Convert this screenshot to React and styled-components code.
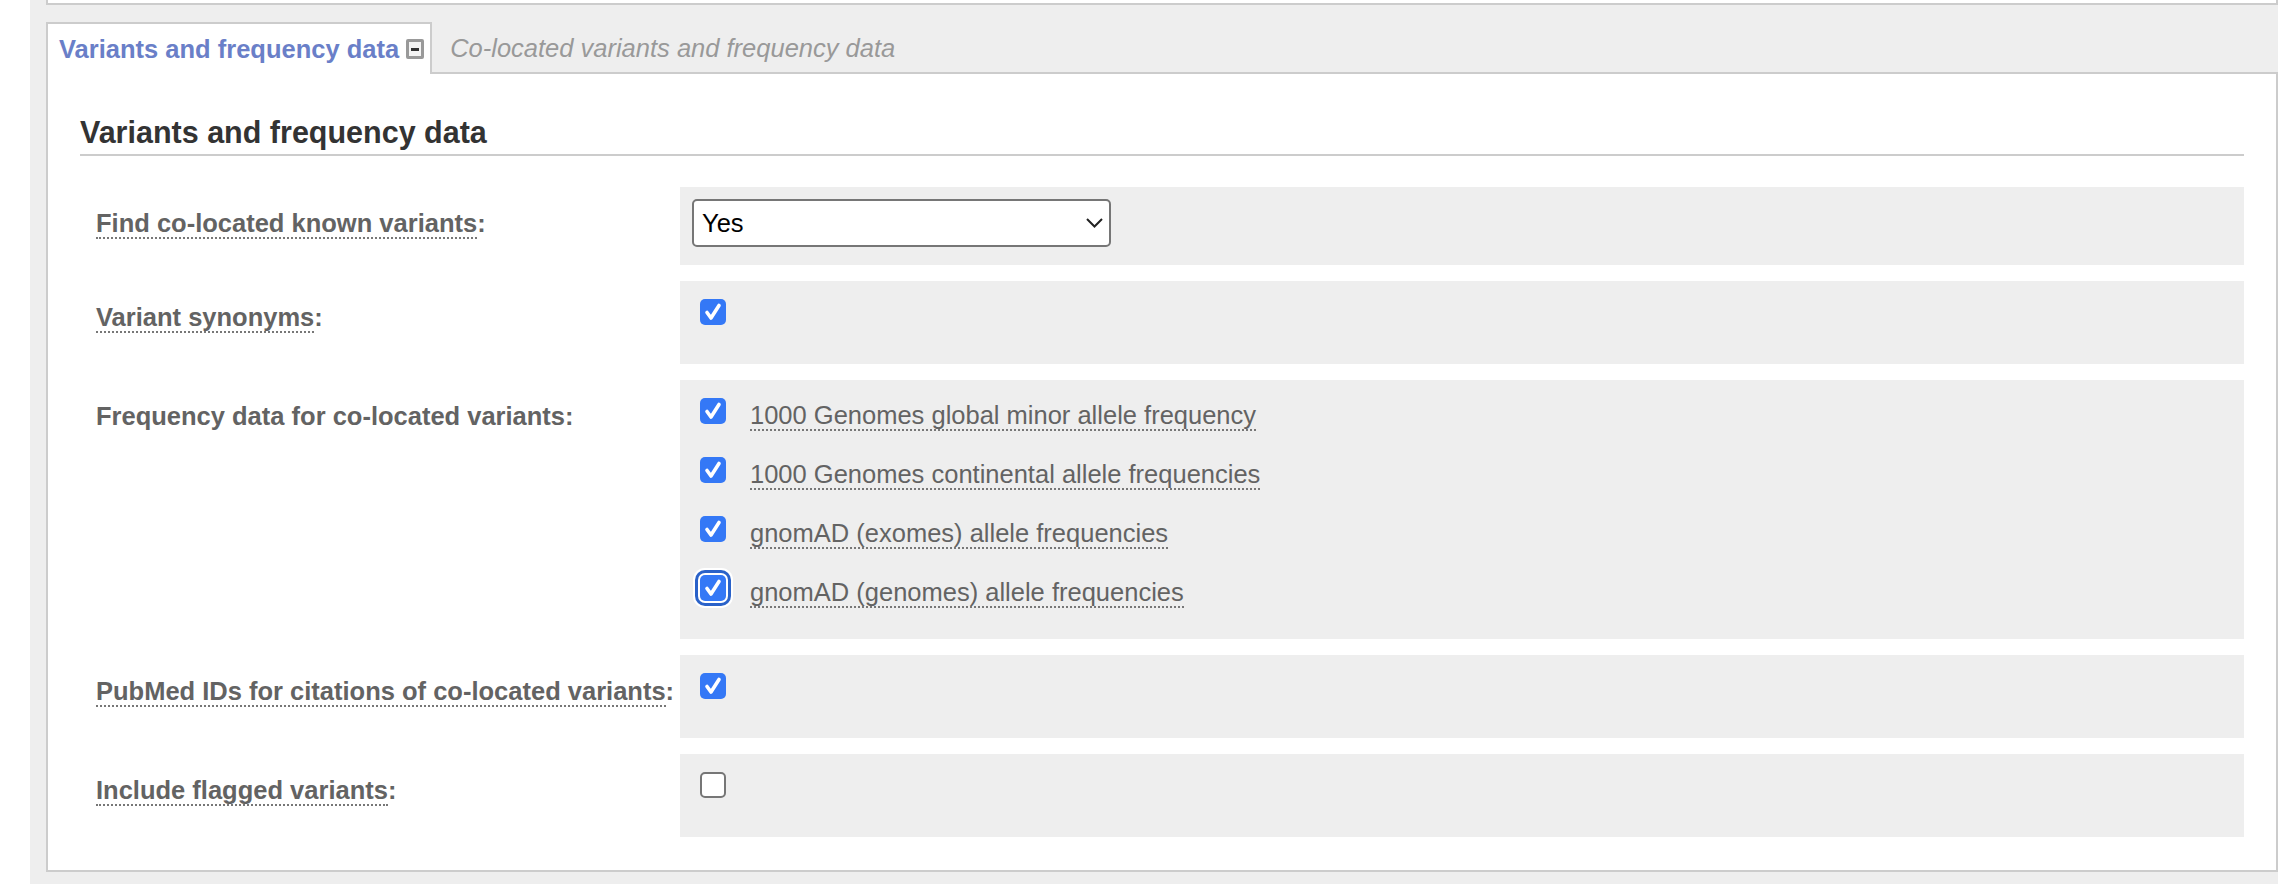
import React from "react";
import styled, { createGlobalStyle, css } from "styled-components";

const GlobalStyle = createGlobalStyle`
  html, body { margin: 0; padding: 0; background: #fff; }
  body { font-family: "Liberation Sans", Arial, Helvetica, sans-serif; }
  * { box-sizing: border-box; }
`;

const Page = styled.div`
  margin-left: 30px;
  width: 2248px;
  min-height: 884px;
  background: #eee;
  padding-left: 16px;
`;

const TopBox = styled.div`
  height: 5px;
  background: #fff;
  border: 2px solid #ccc;
  border-top: 0;
`;

const TabBar = styled.div`
  margin-top: 17px;
  display: flex;
  align-items: flex-end;
  border-bottom: 2px solid #ccc;
`;

const Tab = styled.div`
  display: flex;
  align-items: center;
  font-size: 25.5px;
  white-space: nowrap;
  ${(p) =>
    p.$active
      ? css`
          height: 52px;
          margin-bottom: -2px;
          padding: 0 6px 0 11px;
          background: #fff;
          border: 2px solid #ccc;
          border-bottom: 0;
          color: #6a7fc8;
          font-weight: bold;
        `
      : css`
          height: 48px;
          padding: 0 0 0 18px;
          color: #999;
          font-style: italic;
        `}
`;

const CollapseIcon = styled.span`
  position: relative;
  display: inline-block;
  width: 18px;
  height: 20px;
  margin-left: 7px;
  border: 3px solid #999;
  border-radius: 2px;
  background: #f4f4f4;
  &::after {
    content: "";
    position: absolute;
    left: 2px;
    right: 2px;
    top: 6px;
    height: 3px;
    background: #333;
  }
`;

const Panel = styled.div`
  background: #fff;
  border: 2px solid #ccc;
  border-top: 0;
  padding: 40px 32px 33px;
`;

const Heading = styled.h2`
  margin: 0 0 31px;
  padding-bottom: 4px;
  border-bottom: 2px solid #ccc;
  font-size: 30.5px;
  line-height: 36px;
  font-weight: bold;
  color: #333;
`;

const Rows = styled.div`
  display: flex;
  flex-direction: column;
  gap: 16px;
`;

const Row = styled.div`
  display: grid;
  grid-template-columns: 600px 1fr;
`;

const Label = styled.div`
  padding: 21px 0 0 16px;
  font-size: 25.5px;
  line-height: 30px;
  font-weight: bold;
  color: #636363;
  white-space: nowrap;
`;

const Dotted = styled.span`
  border-bottom: 2px dotted #777;
`;

const Value = styled.div`
  display: flex;
  flex-direction: column;
  align-items: flex-start;
  background: #eee;
  padding: ${(p) => p.$pad || "18px 20px 39px"};
`;

const SelectWrap = styled.div`
  position: relative;
  width: 419px;
  height: 48px;
`;

const Select = styled.select`
  appearance: none;
  -webkit-appearance: none;
  width: 100%;
  height: 100%;
  border: 2px solid #767676;
  border-radius: 5px;
  background: #fff;
  padding: 0 0 0 8px;
  font-family: "Liberation Sans", Arial, sans-serif;
  font-size: 25.5px;
  color: #000;
  outline: none;
`;

const Chevron = styled.svg`
  position: absolute;
  right: 8px;
  top: 19px;
  pointer-events: none;
`;

const Box = styled.span`
  flex: none;
  display: flex;
  align-items: center;
  justify-content: center;
  width: 26px;
  height: 26px;
  border-radius: 5px;
  ${(p) =>
    p.$checked
      ? css`
          background: #3478f6;
        `
      : css`
          background: #fff;
          border: 2px solid #767676;
        `}
  ${(p) =>
    p.$focused &&
    css`
      box-shadow: 0 0 0 2px #fff, 0 0 0 5px #2a62c9, 0 0 0 7px #fff;
    `}
`;

const Options = styled.div`
  display: flex;
  flex-direction: column;
  gap: 27px;
`;

const Option = styled.div`
  display: flex;
  align-items: flex-start;
  gap: 24px;
`;

const OptionText = styled.span`
  margin-top: 2px;
  font-size: 25.5px;
  line-height: 30px;
  color: #636363;
  white-space: nowrap;
`;

function Checkbox({ checked, focused }) {
  return (
    <Box $checked={checked} $focused={focused}>
      {checked && (
        <svg width="26" height="26" viewBox="0 0 26 26">
          <polyline
            points="7,13.5 11,19 19,6.5"
            fill="none"
            stroke="#fff"
            strokeWidth="3.6"
            strokeLinecap="round"
            strokeLinejoin="round"
          />
        </svg>
      )}
    </Box>
  );
}

const freqOptions = [
  { text: "1000 Genomes global minor allele frequency" },
  { text: "1000 Genomes continental allele frequencies" },
  { text: "gnomAD (exomes) allele frequencies" },
  { text: "gnomAD (genomes) allele frequencies", focused: true },
];

export default function App() {
  return (
    <>
      <GlobalStyle />
      <Page>
        <TopBox />
        <TabBar>
          <Tab $active>
            Variants and frequency data
            <CollapseIcon />
          </Tab>
          <Tab>Co-located variants and frequency data</Tab>
        </TabBar>
        <Panel>
          <Heading>Variants and frequency data</Heading>
          <Rows>
            <Row>
              <Label>
                <Dotted>Find co-located known variants</Dotted>:
              </Label>
              <Value $pad="12px 12px 18px">
                <SelectWrap>
                  <Select defaultValue="yes">
                    <option value="yes">Yes</option>
                    <option value="no">No</option>
                  </Select>
                  <Chevron width="17" height="10" viewBox="0 0 17 10">
                    <polyline
                      points="1,1 8.5,8.5 16,1"
                      fill="none"
                      stroke="#222"
                      strokeWidth="2"
                    />
                  </Chevron>
                </SelectWrap>
              </Value>
            </Row>
            <Row>
              <Label>
                <Dotted>Variant synonyms</Dotted>:
              </Label>
              <Value>
                <Checkbox checked />
              </Value>
            </Row>
            <Row>
              <Label>Frequency data for co-located variants:</Label>
              <Value $pad="18px 20px 32px">
                <Options>
                  {freqOptions.map((o) => (
                    <Option key={o.text}>
                      <Checkbox checked focused={o.focused} />
                      <OptionText>
                        <Dotted>{o.text}</Dotted>
                      </OptionText>
                    </Option>
                  ))}
                </Options>
              </Value>
            </Row>
            <Row>
              <Label>
                <Dotted>PubMed IDs for citations of co-located variants</Dotted>:
              </Label>
              <Value>
                <Checkbox checked />
              </Value>
            </Row>
            <Row>
              <Label>
                <Dotted>Include flagged variants</Dotted>:
              </Label>
              <Value>
                <Checkbox />
              </Value>
            </Row>
          </Rows>
        </Panel>
      </Page>
    </>
  );
}
